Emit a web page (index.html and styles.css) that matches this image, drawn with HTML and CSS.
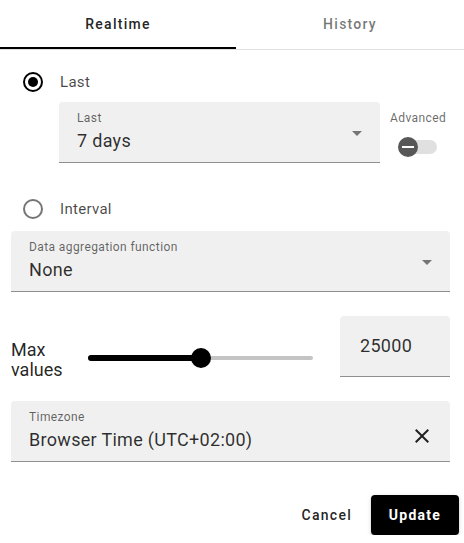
FILE: index.html
```html
<!DOCTYPE html>
<html lang="en">
<head>
<meta charset="utf-8">
<title>Time window</title>
<link rel="stylesheet" href="styles.css">
</head>
<body>
<div class="panel">
  <div class="tabs">
    <div class="tab tab-realtime active">Realtime</div>
    <div class="tab tab-history">History</div>
  </div>
  <div class="content">
    <div class="radio-row radio-last">
      <span class="radio checked"></span>
      <span class="radio-label">Last</span>
    </div>
    <div class="last-row">
      <div class="field last-field">
        <div class="field-text">
          <div class="field-label">Last</div>
          <div class="field-value">7 days</div>
        </div>
        <span class="arrow"></span>
      </div>
      <div class="advanced">
        <div class="adv-label">Advanced</div>
        <div class="toggle">
          <span class="track"></span>
          <span class="thumb"><span class="dash"></span></span>
        </div>
      </div>
    </div>
    <div class="radio-row radio-interval">
      <span class="radio"></span>
      <span class="radio-label">Interval</span>
    </div>
    <div class="field agg-field">
      <div class="field-text">
        <div class="field-label">Data aggregation function</div>
        <div class="field-value">None</div>
      </div>
      <span class="arrow"></span>
    </div>
    <div class="max-row">
      <div class="max-label">Max<br>values</div>
      <div class="slider">
        <div class="slider-track">
          <span class="slider-fill" style="width: 50%"></span>
        </div>
        <span class="slider-thumb" style="left: 50%"></span>
      </div>
      <div class="max-input">25000</div>
    </div>
    <div class="field tz-field">
      <div class="field-text">
        <div class="field-label">Timezone</div>
        <div class="field-value">Browser Time (UTC+02:00)</div>
      </div>
      <svg class="close-icon" width="24" height="24" viewBox="0 0 24 24"><path d="M19 6.41 17.59 5 12 10.59 6.41 5 5 6.41 10.59 12 5 17.59 6.41 19 12 13.41 17.59 19 19 17.59 13.41 12z" fill="#212121"/></svg>
    </div>
  </div>
  <div class="actions">
    <button class="btn btn-cancel">Cancel</button>
    <button class="btn btn-update">Update</button>
  </div>
</div>
</body>
</html>
```

FILE: styles.css
```css
* { box-sizing: border-box; }
html, body { margin: 0; padding: 0; background: #fff; }
body {
  font-family: Roboto, "Liberation Sans", Arial, sans-serif;
  color: rgba(0,0,0,0.87);
  width: 464px;
}
.tabs {
  display: flex;
  border-bottom: 1px solid #e0e0e0;
}
.tab {
  height: 49px;
  padding-bottom: 2px;
  display: flex;
  align-items: center;
  justify-content: center;
  font-family: "Roboto Medium", Roboto, "Liberation Sans", Arial, sans-serif;
  font-size: 14px;
  font-weight: 500;
  letter-spacing: 1.25px;
  color: rgba(0,0,0,0.55);
}
.tab-realtime { flex: 0 0 236px; }
.tab-history { flex: 1 1 auto; }
.tab.active {
  color: rgba(0,0,0,0.87);
  box-shadow: inset 0 -2px 0 #000;
}
.content {
  padding: 0 14px 0 11px;
}
.radio-row {
  display: flex;
  align-items: center;
  height: 20px;
  padding-left: 12px;
}
.radio-last { margin-top: 22px; }
.radio-interval { margin-top: 36px; }
.radio {
  width: 20px;
  height: 20px;
  border-radius: 50%;
  border: 2px solid #757575;
  display: flex;
  align-items: center;
  justify-content: center;
}
.radio.checked { border-color: #000; }
.radio.checked::after {
  content: "";
  width: 10px;
  height: 10px;
  border-radius: 50%;
  background: #000;
}
.radio-label {
  margin-left: 17px;
  font-size: 15px;
  letter-spacing: 0.3px;
  color: rgba(0,0,0,0.72);
}
.last-row {
  display: flex;
  margin-top: 10px;
  margin-left: 48px;
}
.field {
  display: flex;
  align-items: flex-start;
  height: 61px;
  background: #f0f0f0;
  border-radius: 4px 4px 0 0;
  border-bottom: 1px solid #8f8f8f;
  padding: 8px 0 0 18px;
}
.field-text { flex: 1 1 auto; }
.field-label {
  font-size: 12px;
  line-height: 16px;
  letter-spacing: 0.4px;
  color: rgba(0,0,0,0.6);
}
.field-value {
  margin-top: 3px;
  font-size: 18px;
  line-height: 24px;
  letter-spacing: 0.3px;
  color: rgba(0,0,0,0.82);
}
.arrow {
  margin-top: 21px;
  margin-right: 18px;
  width: 0;
  height: 0;
  border-left: 5px solid transparent;
  border-right: 5px solid transparent;
  border-top: 5px solid #757575;
}
.last-field { flex: 0 0 321px; }
.advanced {
  margin-left: 10px;
  width: 60px;
}
.adv-label {
  margin-top: 8px;
  font-size: 12px;
  line-height: 16px;
  letter-spacing: 0.4px;
  color: rgba(0,0,0,0.6);
}
.toggle {
  position: relative;
  margin-top: 11px;
  margin-left: 8px;
  width: 40px;
  height: 20px;
}
.track {
  position: absolute;
  left: 3px;
  top: 3px;
  width: 36px;
  height: 14px;
  border-radius: 7px;
  background: #e0e0e0;
}
.thumb {
  position: absolute;
  left: 0;
  top: 0;
  width: 20px;
  height: 20px;
  border-radius: 50%;
  background: #575757;
  display: flex;
  align-items: center;
  justify-content: center;
}
.dash {
  width: 12px;
  height: 2px;
  background: #fff;
}
.agg-field { margin-top: 12px; }
.max-row {
  display: flex;
  align-items: flex-start;
  margin-top: 24px;
  height: 61px;
}
.max-label {
  flex: 0 0 77px;
  margin-top: 24px;
  font-size: 18px;
  line-height: 20px;
  color: rgba(0,0,0,0.87);
}
.slider {
  position: relative;
  flex: 0 0 225px;
  height: 20px;
  margin-top: 32px;
}
.slider-track {
  margin-top: 8px;
  height: 4px;
  border-radius: 2px;
  background: #c4c4c4;
  position: relative;
}
.slider-fill {
  position: absolute;
  left: 0;
  top: -1px;
  height: 6px;
  border-radius: 3px;
  background: #000;
}
.slider-thumb {
  position: absolute;
  top: 0;
  width: 20px;
  height: 20px;
  margin-left: -10px;
  border-radius: 50%;
  background: #000;
}
.max-input {
  margin-left: 27px;
  flex: 0 0 110px;
  height: 61px;
  background: #f0f0f0;
  border-radius: 4px 4px 0 0;
  border-bottom: 1px solid #8f8f8f;
  padding: 18px 0 0 20px;
  font-size: 18px;
  line-height: 24px;
  letter-spacing: 0.3px;
  color: rgba(0,0,0,0.82);
}
.tz-field { margin-top: 24px; }
.close-icon {
  margin-top: 15px;
  margin-right: 16px;
  flex: 0 0 auto;
}
.actions {
  display: flex;
  justify-content: flex-end;
  margin-top: 33px;
  padding-right: 5px;
}
.btn {
  height: 40px;
  border: none;
  border-radius: 4px;
  font-family: Roboto, "Liberation Sans", Arial, sans-serif;
  font-size: 14px;
  letter-spacing: 1.25px;
  cursor: pointer;
}
.btn-cancel {
  background: transparent;
  color: rgba(0,0,0,0.87);
  font-family: "Roboto Medium", Roboto, "Liberation Sans", Arial, sans-serif;
  font-weight: 500;
  padding: 0 8px;
  margin-right: 11px;
}
.btn-update {
  width: 88px;
  background: #000;
  color: #fff;
  font-weight: 700;
  box-shadow: 0 3px 1px -2px rgba(0,0,0,0.2), 0 2px 2px 0 rgba(0,0,0,0.14), 0 1px 5px 0 rgba(0,0,0,0.12);
}
```
